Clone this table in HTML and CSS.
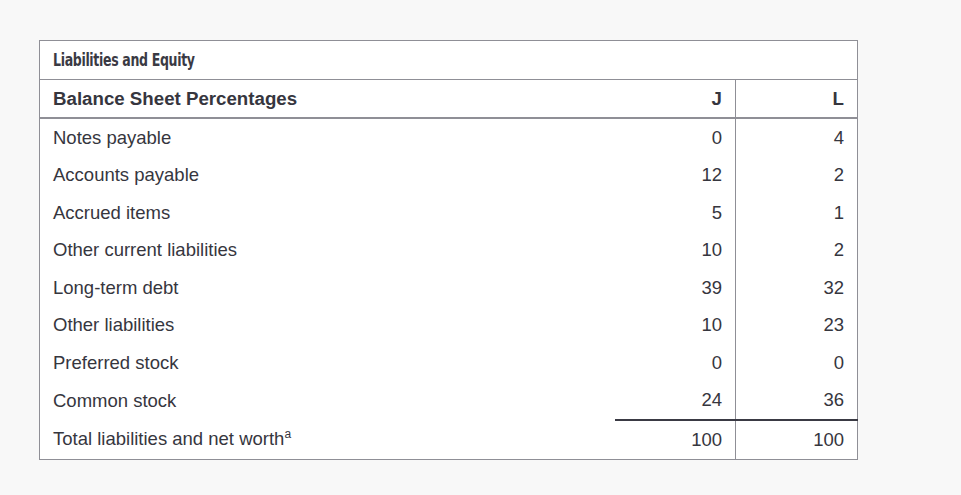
FILE: index.html
```html
<!DOCTYPE html>
<html>
<head>
<meta charset="utf-8">
<link rel="stylesheet" href="styles.css">
</head>
<body>
<div class="page">
<table class="sheet">
  <colgroup><col class="c-label"><col class="c-j"><col class="c-l"></colgroup>
  <thead>
    <tr class="title-row"><th colspan="3" class="title"><span class="title-text">Liabilities and Equity</span></th></tr>
    <tr class="head-row"><th class="label">Balance Sheet Percentages</th><th class="num">J</th><th class="num sep">L</th></tr>
  </thead>
  <tbody>
    <tr><td class="label">Notes payable</td><td class="num">0</td><td class="num sep">4</td></tr>
    <tr><td class="label">Accounts payable</td><td class="num">12</td><td class="num sep">2</td></tr>
    <tr><td class="label">Accrued items</td><td class="num">5</td><td class="num sep">1</td></tr>
    <tr><td class="label">Other current liabilities</td><td class="num">10</td><td class="num sep">2</td></tr>
    <tr><td class="label">Long-term debt</td><td class="num">39</td><td class="num sep">32</td></tr>
    <tr><td class="label">Other liabilities</td><td class="num">10</td><td class="num sep">23</td></tr>
    <tr><td class="label">Preferred stock</td><td class="num">0</td><td class="num sep">0</td></tr>
    <tr><td class="label">Common stock</td><td class="num">24</td><td class="num sep">36</td></tr>
    <tr class="total-row"><td class="label">Total liabilities and net worth<sup>a</sup></td><td class="num">100</td><td class="num sep">100</td></tr>
  </tbody>
</table>
</div>
</body>
</html>
```
FILE: styles.css
```css
html, body {
  margin: 0;
  padding: 0;
  background: #f8f8f8;
}
.page {
  padding: 40px 0 0 39px;
}
.sheet {
  border-collapse: collapse;
  background: #fff;
  border: 1px solid #8f8f96;
  width: 818px;
  table-layout: fixed;
  font-family: "Liberation Sans", Arial, sans-serif;
  color: #36363e;
  font-size: 18.5px;
}
.c-label { width: 575px; }
.c-j { width: 121px; }
.c-l { width: 122px; }
.sheet th, .sheet td {
  padding: 0 13px;
  vertical-align: middle;
}
.title-row th {
  height: 38px;
  text-align: left;
  border-bottom: 1px solid #8f8f96;
}
.title-text {
  display: inline-block;
  font-family: "DejaVu Sans Condensed", sans-serif;
  font-weight: bold;
  font-size: 17px;
  color: #3a3a44;
  letter-spacing: -0.4px;
  transform: scaleX(0.82) scaleY(1.08);
  transform-origin: left center;
}
.head-row th {
  height: 37px;
  font-weight: bold;
  font-size: 18.7px;
  border-bottom: 2px solid #8f8f96;
}
.head-row th.label { text-align: left; }
.sheet tbody td { height: 37.5px; }
.label { text-align: left; }
.num { text-align: right; }
.sep { border-left: 1px solid #8f8f96; }
.total-row td { height: 38px; }
.total-row td.num { border-top: 2px solid #3a3a44; }
sup {
  font-size: 12px;
  vertical-align: 7px;
  line-height: 0;
}
```
